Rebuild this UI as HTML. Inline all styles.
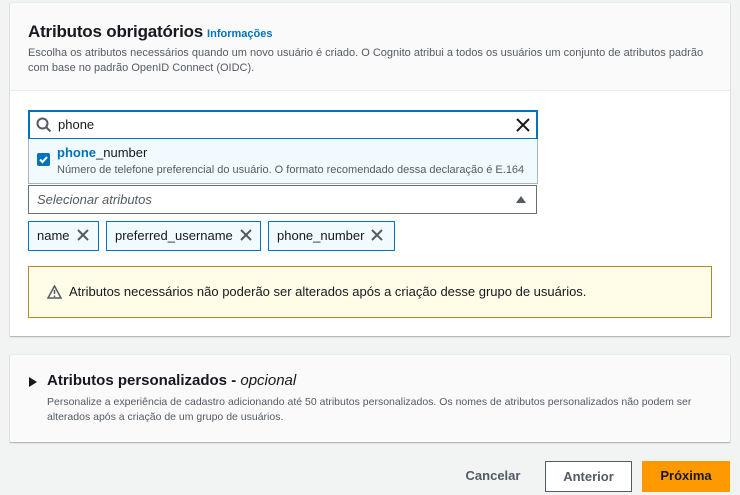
<!DOCTYPE html>
<html><head><meta charset="utf-8"><style>
*{box-sizing:border-box;margin:0;padding:0}
body{width:740px;height:495px;background:#f2f3f3;font-family:"Liberation Sans",sans-serif;color:#16191f;position:relative;overflow:hidden}
.abs{position:absolute}
.card1{left:10px;top:3px;width:720px;height:333px;background:#fff;box-shadow:0 1px 1px rgba(0,28,36,.3),0 0 0 1px #eaeded}
.hdr{left:0;top:0;width:720px;height:88px;background:#fafafa;border-bottom:1px solid #eaeded}
h2{font-size:17px;font-weight:bold;letter-spacing:-.2px}
.info{font-size:11px;color:#0073bb;font-weight:bold;margin-left:4px}
.desc{font-size:11px;color:#545b64;line-height:15px}
.search{left:28px;top:110px;width:510px;height:30px;border:2px solid #0073bb;background:#fff}
.item{left:28px;top:139px;width:510px;height:45px;background:#f1faff;border:1px solid #aab7b8;border-top:none}
.sel{left:28px;top:185px;width:509px;height:29px;border:1px solid #687078;background:#fff;font-style:italic;font-size:13px;color:#545b64;padding:6px 8px}
.tok{top:221px;height:30px;border:1px solid #0073bb;background:#f1faff;font-size:13px;padding:6px 8px;color:#16191f}
.x{display:inline-block;margin-left:7px;vertical-align:-1px}
.alert{left:28px;top:266px;width:684px;height:52px;background:#fffce8;border:1px solid #aa8b2b;font-size:13px;padding:17px 0 0 40px}
.card2{left:10px;top:355px;width:720px;height:87px;background:#fafafa;box-shadow:0 1px 1px rgba(0,28,36,.3),0 0 0 1px #eaeded}
.btn{top:461px;height:31px;font-size:13px;font-weight:bold;padding-top:7px;text-align:center}
</style></head><body>
<div class="abs card1">
 <div class="abs hdr">
  <div class="abs" style="left:18px;top:19px"><h2 style="display:inline">Atributos obrigatórios</h2><span class="info">Informações</span></div>
  <div class="abs desc" style="left:18px;top:43px;width:690px">Escolha os atributos necessários quando um novo usuário é criado. O Cognito atribui a todos os usuários um conjunto de atributos padrão com base no padrão OpenID Connect (OIDC).</div>
 </div>
</div>
<div class="abs search">
 <svg class="abs" style="left:6px;top:5px" width="16" height="16" viewBox="0 0 16 16"><circle cx="6.5" cy="6.5" r="5" fill="none" stroke="#545b64" stroke-width="2"/><line x1="10" y1="10" x2="14.5" y2="14.5" stroke="#545b64" stroke-width="2"/></svg>
 <span class="abs" style="left:28px;top:5px;font-size:13px">phone</span>
 <svg class="abs" style="left:486px;top:6px" width="14" height="14" viewBox="0 0 14 14"><path d="M1 1L13 13M13 1L1 13" stroke="#16191f" stroke-width="2"/></svg>
</div>
<div class="abs item">
 <div class="abs" style="left:8px;top:14px;width:13px;height:13px;background:#0073bb;border-radius:2px"><svg width="13" height="13" viewBox="0 0 13 13"><path d="M3 6.5L5.5 9L10 4" stroke="#fff" stroke-width="2" fill="none"/></svg></div>
 <div class="abs" style="left:28px;top:6px;font-size:13px"><b style="color:#0073bb">phone</b>_number</div>
 <div class="abs" style="left:28px;top:25px;font-size:11px;color:#545b64">Número de telefone preferencial do usuário. O formato recomendado dessa declaração é E.164</div>
</div>
<div class="abs sel">Selecionar atributos
 <svg class="abs" style="left:487px;top:10px" width="10" height="7"><path d="M0 7L5 0L10 7Z" fill="#545b64"/></svg></div>
<div class="abs tok" style="left:28px;width:71px">name<svg class="x" width="12" height="12" viewBox="0 0 12 12"><path d="M1 1L11 11M11 1L1 11" stroke="#545b64" stroke-width="2"/></svg></div>
<div class="abs tok" style="left:106px;width:155px">preferred_username<svg class="x" width="12" height="12" viewBox="0 0 12 12"><path d="M1 1L11 11M11 1L1 11" stroke="#545b64" stroke-width="2"/></svg></div>
<div class="abs tok" style="left:268px;width:127px">phone_number<svg class="x" width="12" height="12" viewBox="0 0 12 12"><path d="M1 1L11 11M11 1L1 11" stroke="#545b64" stroke-width="2"/></svg></div>
<div class="abs alert">
 <svg class="abs" style="left:18px;top:18px" width="15" height="14" viewBox="0 0 15 14"><path d="M7.5 1L14 13H1Z" fill="none" stroke="#545b64" stroke-width="1.5"/><path d="M7.5 5V9M7.5 10.5V12" stroke="#545b64" stroke-width="1.5"/></svg>
 Atributos necessários não poderão ser alterados após a criação desse grupo de usuários.</div>
<div class="abs card2">
 <svg class="abs" style="left:19px;top:22px" width="8" height="10"><path d="M0 0L8 5L0 10Z" fill="#16191f"/></svg>
 <div class="abs" style="left:37px;top:17px;font-size:15px;font-weight:bold">Atributos personalizados - <i style="font-weight:normal">opcional</i></div>
 <div class="abs desc" style="left:37px;top:40px;width:660px;font-size:10.5px">Personalize a experiência de cadastro adicionando até 50 atributos personalizados. Os nomes de atributos personalizados não podem ser alterados após a criação de um grupo de usuários.</div>
</div>
<div class="abs btn" style="left:458px;width:70px;color:#545b64">Cancelar</div>
<div class="abs btn" style="left:545px;width:87px;border:1px solid #545b64;background:#fff;color:#545b64">Anterior</div>
<div class="abs btn" style="left:642px;width:88px;background:#ff9900;color:#16191f">Próxima</div>
</body></html>
